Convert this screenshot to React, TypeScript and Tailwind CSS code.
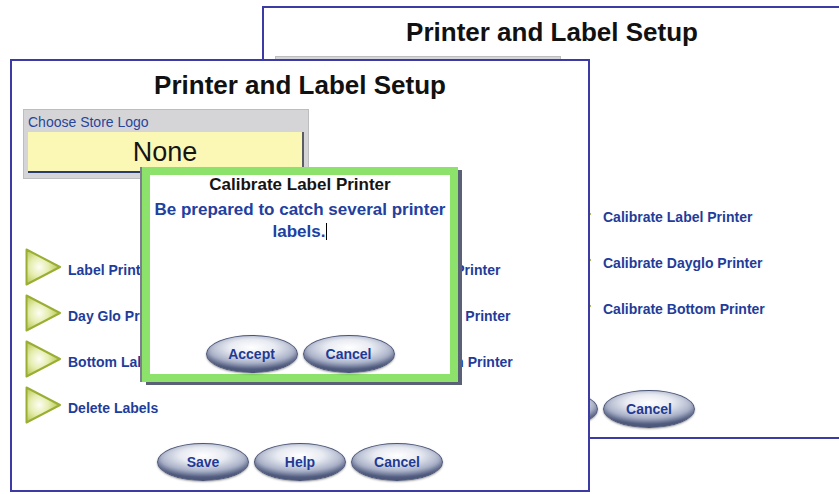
import React from 'react';

const FONT = { fontFamily: '"Liberation Sans", Arial, sans-serif' };

function Arrow() {
  return (
    <svg width="37" height="38" viewBox="0 0 37 38" className="shrink-0">
      <defs>
        <radialGradient id="arrowFill" cx="0.38" cy="0.5" r="0.62">
          <stop offset="0" stopColor="#fdfef4" />
          <stop offset="0.45" stopColor="#e6edb0" />
          <stop offset="1" stopColor="#b3c44a" />
        </radialGradient>
      </defs>
      <polygon
        points="1.5,1.5 35,19 1.5,36.5"
        fill="url(#arrowFill)"
        stroke="#9aae34"
        strokeWidth="2"
        strokeLinejoin="round"
      />
    </svg>
  );
}

function OvalButton({ label }: { label: string }) {
  return (
    <button className="w-[92px] h-[38px] rounded-[50%] border border-[#4a5476] bg-[radial-gradient(ellipse_70%_60%_at_50%_32%,#ffffff_0%,#e8ebf2_36%,#a9b1c8_72%,#5f6a8b_100%)] shadow-[inset_0_-3px_5px_rgba(40,50,90,0.4),0_1px_2px_rgba(0,0,0,0.35)] text-[14px] font-bold text-[#1f3a95] leading-none">
      {label}
    </button>
  );
}

function Item({ label, gap }: { label: string; gap: string }) {
  return (
    <div className={`flex items-center h-[37px] ${gap}`}>
      <Arrow />
      <span className="mt-[7px] text-[14px] leading-[16px] font-bold text-[#1f3c9a] whitespace-nowrap">
        {label}
      </span>
    </div>
  );
}

function SetupWindow() {
  return (
    <div className="w-[580px] h-[433px] border-2 border-[#3b3ba3] bg-white flex flex-col">
      <h1 className="pt-[9px] text-center text-[26px] leading-[30px] font-bold text-[#111]">
        Printer and Label Setup
      </h1>

      <div className="ml-[11px] mt-[9px] w-[286px] h-[70px] bg-[#d5d5d7] border border-[#bdbdc0] px-[4px] pt-[4px]">
        <div className="text-[14px] leading-[16px] text-[#28459b]">Choose Store Logo</div>
        <div className="mt-[2px] h-[41px] bg-[#fbf8b6] border-b-2 border-b-[#2b3c6c] border-r-2 border-r-[#5a5d64] text-center text-[27px] leading-[40px] text-[#151515]">
          None
        </div>
      </div>

      <div className="mt-[69px] pl-[13px] grid grid-cols-[278px_1fr] gap-y-[9px]">
        <Item label="Label Printer" gap="gap-[6px]" />
        <Item label="Calibrate Label Printer" gap="gap-[11px]" />
        <Item label="Day Glo Printer" gap="gap-[6px]" />
        <Item label="Calibrate Dayglo Printer" gap="gap-[11px]" />
        <Item label="Bottom Label Printer" gap="gap-[6px]" />
        <Item label="Calibrate Bottom Printer" gap="gap-[11px]" />
        <Item label="Delete Labels" gap="gap-[6px]" />
      </div>

      <div className="mt-[20px] flex justify-center gap-[5px]">
        <OvalButton label="Save" />
        <OvalButton label="Help" />
        <OvalButton label="Cancel" />
      </div>
    </div>
  );
}

function CalibrateDialog() {
  return (
    <div className="absolute left-[142px] top-[167px] w-[316px] h-[215px] border-[8px] border-[#8ce26a] bg-white shadow-[4px_3px_0_#5a6176,-2px_0_0_#7b808c] flex flex-col items-center">
      <div className="text-[17px] leading-[20px] font-bold text-[#141414]">Calibrate Label Printer</div>
      <p className="mt-[4px] px-[2px] text-center text-[17px] leading-[22px] font-bold text-[#2140a0]">
        Be prepared to catch several printer labels.
        <span className="inline-block w-px h-[17px] bg-black align-[-3px] ml-[1px]" />
      </p>
      <div className="mt-auto pb-[1px] flex gap-[5px]">
        <OvalButton label="Accept" />
        <OvalButton label="Cancel" />
      </div>
    </div>
  );
}

export default function App() {
  return (
    <div className="relative w-[839px] h-[494px] overflow-hidden bg-white" style={FONT}>
      <div className="absolute left-[262px] top-[6px]">
        <SetupWindow />
      </div>
      <div className="absolute left-[10px] top-[59px]">
        <SetupWindow />
      </div>
      <CalibrateDialog />
    </div>
  );
}
